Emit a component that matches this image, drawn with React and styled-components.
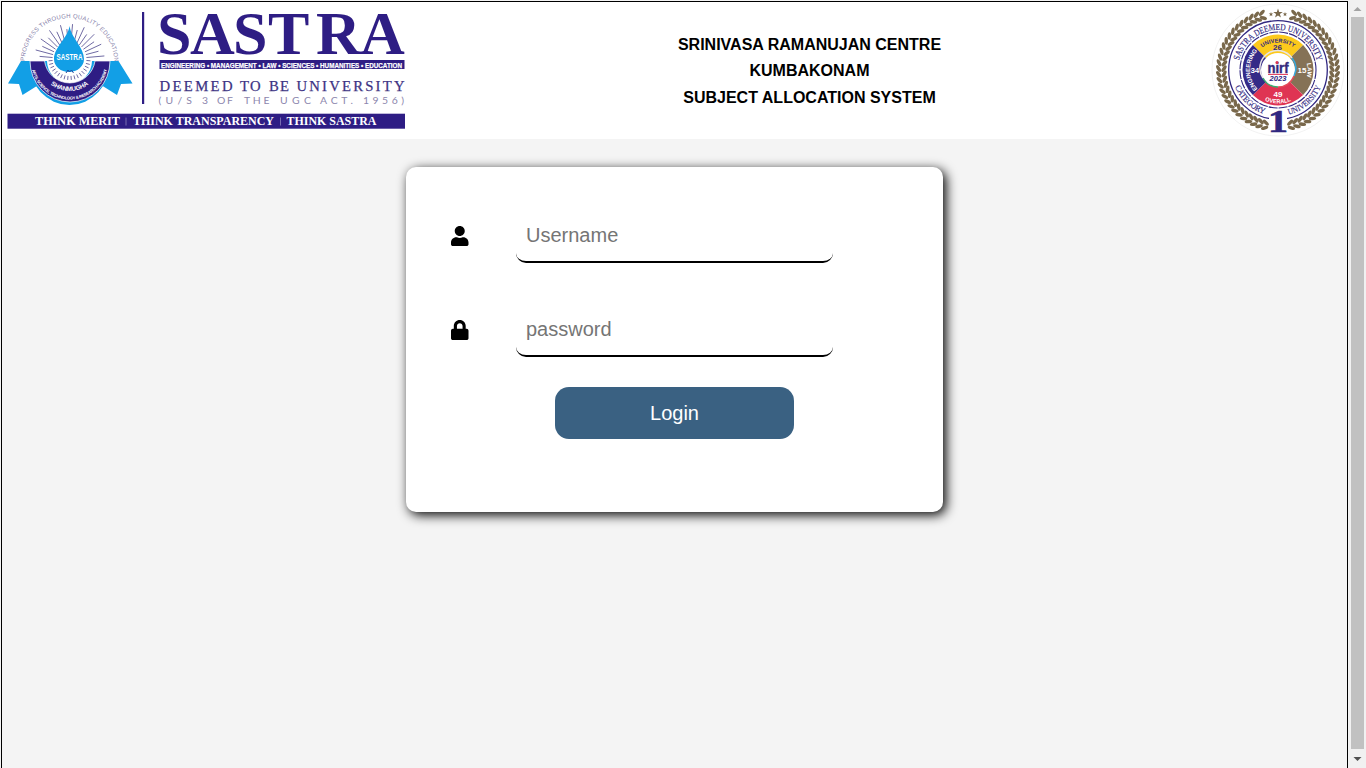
import React from "react";
import styled, { createGlobalStyle } from "styled-components";
import { FaUser, FaLock } from "react-icons/fa";

const GlobalStyle = createGlobalStyle`
  * { box-sizing: border-box; }
  html, body { margin: 0; height: 100%; overflow: hidden; background: #f4f4f4; }
  body { font-family: "Liberation Sans", Arial, sans-serif; color: #000; }
`;

const Screen = styled.div`
  display: flex;
  height: 768px;
  width: 1366px;
  overflow: hidden;
`;

const Page = styled.div`
  width: 1347px;
  height: 800px;
  margin: 1px 1px 0 1px;
  border: 1px solid #000;
  flex: none;
`;

const Header = styled.header`
  display: flex;
  justify-content: space-between;
  height: 137px;
  background: #fff;
`;

const Heading = styled.div`
  width: 400px;
  margin: 29.5px 0 0 1px;
  text-align: center;
  font-size: 16px;
  font-weight: bold;
  line-height: 26.5px;
`;

const LogoArt = styled.svg`
  display: block;
  flex: none;
  width: 405px;
  height: 137px;
  overflow: visible;
`;

const SealArt = styled.svg`
  display: block;
  flex: none;
  width: 136px;
  height: 137px;
`;

const Card = styled.form`
  width: 537px;
  height: 345px;
  margin: 28px 0 0 404px;
  padding: 40px 110px 0 45px;
  background: #fff;
  border-radius: 10px;
  box-shadow: 3px 3px 12px #000;
`;

const Field = styled.label`
  display: flex;
  justify-content: space-between;
  align-items: center;
  height: 56px;
  margin-bottom: 38px;
  font-size: 20px;

  svg { width: 17.5px; height: 20px; margin-top: 2px; }
`;

const Input = styled.input`
  width: 317px;
  height: 56px;
  padding: 12px 10px 10px;
  border: 0;
  border-bottom: 2px solid #000;
  border-radius: 10px;
  outline: none;
  background: transparent;
  font: 20px "Liberation Sans", Arial, sans-serif;

  &::placeholder { color: #757575; opacity: 1; }
`;

const LoginButton = styled.button`
  display: block;
  width: 239px;
  height: 52px;
  margin: -8px 0 0 104px;
  border: 0;
  border-radius: 14px;
  background: #3a6182;
  color: #fff;
  font: 20px "Liberation Sans", Arial, sans-serif;
`;

const Scrollbar = styled.div`
  display: flex;
  flex-direction: column;
  align-items: center;
  width: 17px;
  height: 768px;
  background: #f1f1f1;
`;

const Arrow = styled.svg`
  display: block;
  width: 17px;
  height: ${(p) => (p.$end ? 19 : 17)}px;
  fill: ${(p) => (p.$end ? "#505050" : "#a3a3a3")};
`;

const Thumb = styled.div`
  width: 13px;
  height: 732px;
  background: #c1c1c1;
`;

const NAVY = "#2e1d84";
const CYAN = "#129fe6";
const range = (n) => Array.from({ length: n }, (_, i) => i);
const polar = (cx, cy, r, deg) => {
  const a = (deg * Math.PI) / 180;
  return [cx + r * Math.cos(a), cy + r * Math.sin(a)];
};

const STATUS_WORDS = [
  ["DEEMED", 159.5, 73],
  ["TO", 240, 20.5],
  ["BE", 269, 20],
  ["UNIVERSITY", 296.5, 108],
];

const ACT_WORDS = [
  ["(U/S", 158.5, 33.5],
  ["3", 202, 6.5],
  ["OF", 217, 16],
  ["THE", 244, 25.5],
  ["UGC", 280, 31],
  ["ACT.", 320, 33],
  ["1956)", 363, 41],
];

function UniversityLogo() {
  return (
    <LogoArt viewBox="2 2 405 137" fontFamily="Liberation Serif, serif">
      <defs>
        <path id="motto" d="M24.5 63A45 45 0 0 1 114.5 63" />
        <path id="trust" d="M38.5 60A31 31 0 0 0 100.5 60" />
        <path id="academy" d="M31 61A38.5 38.5 0 0 0 108 61" />
      </defs>
      <text fontSize="6" fill="#8882aa" fontFamily="Liberation Sans">
        <textPath href="#motto" startOffset="2" textLength="138">PROGRESS THROUGH QUALITY EDUCATION</textPath>
      </text>
      {range(36).map((i) => {
        const a = i * 10 + 5;
        const [x1, y1] = polar(69.5, 59, 17, a);
        const [x2, y2] = polar(69.5, 59, a > 180 ? (i % 2 ? 35 : 30) : 21, a);
        return <line key={i} x1={x1} y1={y1} x2={x2} y2={y2} stroke="#5f5999" strokeWidth="0.9" />;
      })}
      <path d="M21 61H31Q32 75 40 84L22.5 95L19 84L8 83.5Z" fill={CYAN} />
      <path d="M118.5 61H108.5Q107 75 99.5 84L117 95L121 84L132.5 83.5Z" fill={CYAN} />
      <path d="M28.5 61A41 44 0 0 0 110.5 61H92A22.5 22.5 0 0 1 47 61Z" fill={CYAN} />
      <path d="M30 61A39.5 40.5 0 0 0 110 61H95A25.5 25.5 0 0 1 44.5 61Z" fill={NAVY} stroke="#fff" strokeWidth="0.7" />
      <path d="M69.5 26C68 38 54 47 54 59A15 13 0 0 0 84 59C84 47 71 38 69.5 26Z" fill={CYAN} />
      <text x="56.5" y="60" fontSize="9" fontWeight="bold" fill="#fff" fontFamily="Liberation Sans" textLength="26" lengthAdjust="spacingAndGlyphs">SASTRA</text>
      <path d="M66 73l2-3 1.5 2 2-2 2 3" fill="none" stroke="#2b4b9c" strokeWidth="1" />
      <text fontSize="6.4" fontWeight="bold" fill="#fff" fontFamily="Liberation Sans">
        <textPath href="#trust" startOffset="28.2" textLength="41">SHANMUGHA</textPath>
      </text>
      <text fontSize="4.2" fontWeight="bold" fill="#fff" fontFamily="Liberation Sans">
        <textPath href="#academy" startOffset="9" textLength="103">ARTS, SCIENCE, TECHNOLOGY &amp; RESEARCH ACADEMY</textPath>
      </text>

      <rect x="142" y="12" width="2.2" height="92" fill={NAVY} />
      <text x="157 190 233 268 316 360" y="54" fontSize="62" fontWeight="bold" fill={NAVY}>SASTRA</text>
      <rect x="159.5" y="60" width="245" height="9" fill={NAVY} />
      <text x="161" y="67.6" fontSize="8" fontWeight="bold" fill="#fff" stroke="#fff" strokeWidth="0.25" fontFamily="Liberation Sans" textLength="241" lengthAdjust="spacingAndGlyphs">ENGINEERING • MANAGEMENT • LAW • SCIENCES • HUMANITIES • EDUCATION</text>
      <g fontSize="14.7" fill="#3d3384" stroke="#3d3384" strokeWidth="0.25">
        {STATUS_WORDS.map(([word, x, w]) => (
          <text key={word} x={x} y="90.7" textLength={w}>{word}</text>
        ))}
      </g>
      <g fontSize="10.4" fill="#8c86ad" fontFamily="Lato, sans-serif">
        {ACT_WORDS.map(([word, x, w]) => (
          <text key={word} x={x} y="104" textLength={w}>{word}</text>
        ))}
      </g>
      <rect x="7.5" y="113.7" width="397.5" height="15" fill={NAVY} />
      <g fill="#fff" fontSize="11.8" fontWeight="bold">
        <text x="35" y="125.3" textLength="85" lengthAdjust="spacingAndGlyphs">THINK MERIT</text>
        <text x="133" y="125.3" textLength="141" lengthAdjust="spacingAndGlyphs">THINK TRANSPARENCY</text>
        <text x="286.5" y="125.3" textLength="90" lengthAdjust="spacingAndGlyphs">THINK SASTRA</text>
      </g>
      <path d="M126 117.5V125.5M280.5 117.5V125.5" stroke="#8a80bb" strokeWidth="0.8" />
    </LogoArt>
  );
}

function starPoints(cx, cy, r) {
  return range(10)
    .map((i) => polar(cx, cy, i % 2 ? r * 0.4 : r, -90 + i * 36).join(","))
    .join(" ");
}

function RankingSeal() {
  const cx = 1278;
  const cy = 70;
  const sector = (a, fill) => {
    const [x1, y1] = polar(cx, cy, 35.5, a);
    const [x2, y2] = polar(cx, cy, 35.5, a + 90);
    return <path key={a} d={`M${cx} ${cy}L${x1} ${y1}A35.5 35.5 0 0 1 ${x2} ${y2}Z`} fill={fill} />;
  };
  return (
    <SealArt viewBox="1211 2 136 137">
      <defs>
        <path id="sealTop" d="M1238 70A40 40 0 0 1 1318 70" />
        <path id="sealBottom" d="M1232 70A46 46 0 0 0 1324 70" />
        <path id="pieTop" d="M1250.5 70A27.5 27.5 0 0 1 1305.5 70" />
        <path id="pieLeft" d="M1278 98A28 28 0 0 1 1278 42" />
        <path id="pieRight" d="M1278 40.5A29.5 29.5 0 0 1 1278 99.5" />
        <path id="pieBottom" d="M1244.5 70A33.5 33.5 0 0 0 1311.5 70" />
      </defs>
      <circle cx={cx} cy={cy} r="66" fill="#fff" stroke="#ededed" strokeWidth="0.7" />
      {range(56).map((i) => {
        const left = i % 2;
        const step = Math.floor(i / 2);
        const angle = 103 + step * 5.6;
        const a = left ? angle : 180 - angle;
        return (
          <g key={i} fill="#79684b">
            {[54, 59.4].map((r, k) => {
              const [x, y] = polar(cx, cy, r, a);
              const turn = a + (left ? 90 : -90) + (left ? 1 : -1) * (k ? -32 : 32);
              return <ellipse key={r} cx={x} cy={y} rx="3.8" ry="1.75" transform={`rotate(${turn} ${x} ${y})`} />;
            })}
          </g>
        );
      })}
      <g fill="#79684b">
        <polygon points={starPoints(1278, 13.5, 5)} />
        <polygon points={starPoints(1271, 14.3, 2.4)} />
        <polygon points={starPoints(1285, 14.3, 2.4)} />
      </g>
      <circle cx={cx} cy={cy} r="49.3" fill="#fff" stroke="#302780" strokeWidth="1.3" />
      <circle cx={cx} cy={cy} r="38" fill="none" stroke="#302780" strokeWidth="1.1" strokeDasharray="9 1" />
      <g fontFamily="Liberation Serif, serif" fill="#302780" stroke="#302780" strokeWidth="0.15" fontSize="9">
        <text><textPath href="#sealTop" startOffset="9.5" textLength="107" lengthAdjust="spacingAndGlyphs">SASTRA DEEMED UNIVERSITY</textPath></text>
        <text fontSize="8.4"><textPath href="#sealBottom" startOffset="17" textLength="41" lengthAdjust="spacingAndGlyphs">CATEGORY</textPath></text>
        <text fontSize="8.4"><textPath href="#sealBottom" startOffset="83" textLength="44" lengthAdjust="spacingAndGlyphs">UNIVERSITY</textPath></text>
      </g>
      {sector(225, "#fcc91c")}
      {sector(315, "#857256")}
      {sector(45, "#df3453")}
      {sector(135, "#352b87")}
      <circle cx={cx} cy={cy} r="17" fill="#fff" />
      <g fill="none" strokeWidth="1.5">
        <path d="M1292 58A17 17 0 0 1 1294 76" stroke="#35a9df" />
        <path d="M1294 76A17 17 0 0 1 1278 87" stroke="#e54b58" />
        <path d="M1278 87A17 17 0 0 1 1263 78" stroke="#39ad70" />
        <path d="M1263 78A17 17 0 0 1 1292 58" stroke="#e7e4e7" />
      </g>
      <g fontFamily="Liberation Sans, sans-serif" fontWeight="bold">
        <text x="1278" y="73" textAnchor="middle" fontSize="14" fill="#342a7d" stroke="#342a7d" strokeWidth="0.4" textLength="21" lengthAdjust="spacingAndGlyphs">nirf</text>
        <circle cx="1277" cy="62.5" r="1.5" fill="#df3453" />
        <path d="M1268 74.4H1288" stroke="#df3453" strokeWidth="1" />
        <text x="1278" y="81.2" textAnchor="middle" fontSize="6.5" fontStyle="italic" fill="#302780" textLength="17" lengthAdjust="spacingAndGlyphs">2023</text>
        <text fontSize="5.6" fill="#302780"><textPath href="#pieTop" startOffset="26.2" textLength="34" lengthAdjust="spacingAndGlyphs">UNIVERSITY</textPath></text>
        <text x="1273" y="50.2" fontSize="8" fill="#302780" textLength="9">26</text>
        <g fill="#fff">
          <text fontSize="6"><textPath href="#pieLeft" startOffset="23" textLength="42" lengthAdjust="spacingAndGlyphs">ENGINEERING</textPath></text>
          <text fontSize="6"><textPath href="#pieRight" startOffset="39.5" textLength="14" lengthAdjust="spacingAndGlyphs">LAW</textPath></text>
          <text fontSize="6"><textPath href="#pieBottom" startOffset="39" textLength="27" lengthAdjust="spacingAndGlyphs">OVERALL</textPath></text>
          <text x="1250.5" y="73.3" fontSize="8" textLength="8.8">34</text>
          <text x="1297.5" y="73.3" fontSize="8" textLength="9">15</text>
          <text x="1273.5" y="97" fontSize="8" textLength="9">49</text>
        </g>
      </g>
      <path d="M1269 110H1287V134H1269Z" fill="#fff" />
      <text x="1278" y="132" textAnchor="middle" fontFamily="Liberation Serif, serif" fontSize="31" fontWeight="bold" fill="#302780" stroke="#302780" strokeWidth="0.6" textLength="20" lengthAdjust="spacingAndGlyphs">1</text>
    </SealArt>
  );
}

export default function App() {
  return (
    <>
      <GlobalStyle />
      <Screen>
        <Page>
          <Header>
            <UniversityLogo />
            <Heading>
              SRINIVASA RAMANUJAN CENTRE<br />
              KUMBAKONAM<br />
              SUBJECT ALLOCATION SYSTEM
            </Heading>
            <RankingSeal />
          </Header>
          <Card onSubmit={(e) => e.preventDefault()}>
            <Field>
              <FaUser />
              <Input type="text" placeholder="Username" />
            </Field>
            <Field>
              <FaLock />
              <Input type="password" placeholder="password" />
            </Field>
            <LoginButton>Login</LoginButton>
          </Card>
        </Page>
        <Scrollbar>
          <Arrow viewBox="0 0 17 17"><path d="M4.5 11L8.5 7L12.5 11Z" /></Arrow>
          <Thumb />
          <Arrow $end viewBox="0 0 17 19"><path d="M4.5 8L8.5 12L12.5 8Z" /></Arrow>
        </Scrollbar>
      </Screen>
    </>
  );
}
